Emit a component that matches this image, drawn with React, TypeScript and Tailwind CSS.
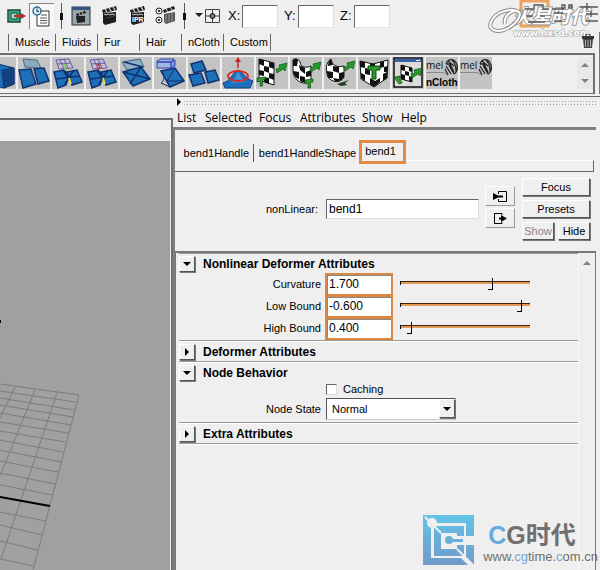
import React, { useState } from 'react';

const SHELF_TABS = [
  { name: 'Muscle', width: 'w-[47px]' },
  { name: 'Fluids', width: 'w-[42px]' },
  { name: 'Fur', width: 'w-[42px]' },
  { name: 'Hair', width: 'w-[42px]' },
  { name: 'nCloth', width: 'w-[42px]' },
  { name: 'Custom', width: 'w-[47px]' },
];

const MENUS = [
  { name: 'List', width: 'w-[28px]' },
  { name: 'Selected', width: 'w-[54px]' },
  { name: 'Focus', width: 'w-[41px]' },
  { name: 'Attributes', width: 'w-[62px]' },
  { name: 'Show', width: 'w-[39px]' },
  { name: 'Help', width: 'w-[30px]' },
];

const RAISED = 'border border-t-white border-l-white border-r-[#555] border-b-[#555] shadow-[1px_1px_0_#777]';

// ---------- toolbar icons ----------

function RenderTarget() {
  return (
    <svg width="20" height="16" viewBox="0 0 20 16">
      <rect x="1" y="2" width="12" height="12" fill="#3fae86" stroke="#164b3c" strokeWidth="1.5" />
      <rect x="4" y="5" width="6" height="6" fill="#8fe0da" stroke="#164b3c" />
      <path d="M7 8h8" stroke="#c22" strokeWidth="2" />
      <path d="M14 5l5 3-5 3z" fill="#c22" />
    </svg>
  );
}

function HistoryIcon() {
  return (
    <svg width="20" height="22" viewBox="0 0 20 22">
      <path d="M5 5h12v15H5z" fill="#fff" stroke="#333" />
      <path d="M9 9h6M8 12h7M8 14.500h7M8 17h7" stroke="#555" />
      <circle cx="5" cy="5" r="4" fill="#dff3fb" stroke="#2a6f96" strokeWidth="1.500" />
      <path d="M5 2.500v3h2" stroke="#124" fill="none" />
    </svg>
  );
}

function Clapper({ label }: { label?: string }) {
  return (
    <svg width="18" height="22" viewBox="0 0 18 22">
      <path d="M1 5L15 1l1 4L2 8z" fill="#1b1b1b" />
      <path d="M4 4l2 3M8 3l2 3M12 2l2 3" stroke="#ddd" strokeWidth="1.300" />
      <path d="M2 8l13-1v10L4 20l-2-2z" fill="#1f1f1f" />
      <path d="M3 9l2 1 2-1 2 1 2-1 3 1" stroke="#ccc" fill="none" />
      {label ? (
        <text x="3" y="17" fontSize="7" fontWeight="bold" fill="#fff" fontFamily="Liberation Sans, sans-serif">{label}</text>
      ) : (
        <path d="M6 13l7-2" stroke="#444" />
      )}
    </svg>
  );
}

function ClapperWindow() {
  return (
    <svg width="20" height="20" viewBox="0 0 20 20">
      <rect x="1" y="1" width="18" height="18" fill="#9aa5ac" stroke="#26303c" />
      <path d="M1 1h18v3H1z" fill="#35537c" />
      <path d="M5 8l9-3 1 2-9 3z" fill="#111" />
      <path d="M5 10h9v6l-8 1z" fill="#222" />
      <path d="M8 7l1 2M11 6l1 2" stroke="#ddd" />
    </svg>
  );
}

function ClapperGlobals() {
  return (
    <svg width="21" height="22" viewBox="0 0 21 22">
      <g fill="#eee" stroke="#222">
        <circle cx="4" cy="6" r="3" />
        <circle cx="4" cy="15" r="3" />
      </g>
      <circle cx="4" cy="6" r="1" />
      <circle cx="4" cy="15" r="1" />
      <path d="M8 5l11-4 1 3L9 8z" fill="#222" />
      <path d="M11 4l2 3M15 2l2 3" stroke="#ddd" />
      <path d="M9 9l11-2v9l-9 3-2-2z" fill="#555" />
      <path d="M11 10v7M14 9v8M17 8v8" stroke="#999" />
    </svg>
  );
}

function ToolSeparator() {
  return (
    <svg width="5" height="26" viewBox="0 0 5 26">
      <path d="M2.500 0v26" stroke="#555" />
      <path d="M1 10h3v7H1z" fill="#111" />
    </svg>
  );
}

function PivotIcon() {
  return (
    <svg width="25" height="16" viewBox="0 0 25 16">
      <path d="M0 5h8L4 9z" fill="#222" />
      <path d="M10.500 1.500h14v13h-14zM17.500 1v14M10 8h15" fill="none" stroke="#444" />
      <circle cx="17.500" cy="8" r="2.500" fill="#777" stroke="#111" />
    </svg>
  );
}

const SWIRL = 'M32 13C24 6 7 12 3 22c-4 9 8 12 19 5 9-6 13-15 7-16-6-1-14 6-12 13';

function LayoutIcons() {
  return (
    <svg width="112" height="38" viewBox="0 0 112 38">
      <path d="M33 1h27v25H33z" fill="none" stroke="#eda35f" strokeWidth="3" />
      <text x="25" y="23" fontSize="19" fontFamily="Noto Sans CJK SC, sans-serif" fontWeight="bold" fontStyle="italic" fill="#fff" stroke="#999" strokeWidth="2" paintOrder="stroke">火星时代</text>
      <g fill="none" stroke="#555" strokeWidth="1.300">
        <path d="M37 9h9V5h9v4h6M40 22h17M39 16h6M52 16h5" />
        <path d="M64 9h12M66 13h9M74 5h3v3h-3zM81 5h3v3h-3zM66 21h8" />
        <path d="M92 7h18M99 3v7M98 14h12M103 11v6M98 21h12" />
      </g>
      <path d={SWIRL} fill="none" stroke="#8c8c8c" strokeWidth="4" />
      <path d={SWIRL} fill="none" stroke="#fff" strokeWidth="2" />
      <text x="25" y="36" fontSize="9" fontWeight="bold" fill="#fff" stroke="#999" strokeWidth="1" paintOrder="stroke" fontFamily="DejaVu Sans, sans-serif">www.hxsd.com</text>
    </svg>
  );
}

function TrashIcon() {
  return (
    <svg width="14" height="15" viewBox="0 0 14 15">
      <path d="M5 2V0h4v2" fill="none" stroke="#333" />
      <path d="M1 2h12v3H1z" fill="#333" />
      <path d="M2 5h10l-1 9H3z" fill="#444" />
      <path d="M4.500 6v7M7 6v7M9.500 6v7" stroke="#aaa" />
    </svg>
  );
}

// ---------- shelf icons ----------

const BLUE = '#1d6fb8';
const NAVY = '#12316f';

function Lattice() {
  return (
    <g stroke={NAVY}>
      <path d="M0 10l14-3 16 4v16l-10 4L0 26z" fill={BLUE} />
      <path d="M18 13l12-2v16l-10 4z" fill="#104a86" />
      <path d="M20 15v15M24 13v15M27 12v16M18 19l12-3M19 24l11-3" fill="none" strokeWidth="0.700" />
    </g>
  );
}

function Wrap() {
  return (
    <g stroke={NAVY}>
      <path d="M5 2l14 1 4 8-16-1z" fill="#8baabe" stroke="#4c6a80" />
      <path d="M1 13l12-1 5 15-13 4z" fill={BLUE} strokeWidth="1.500" />
      <path d="M16 12l10-1 5 13-11 3z" fill={BLUE} strokeWidth="1.500" />
      <path d="M14 13l3 9" stroke="#777" />
    </g>
  );
}

function Cluster({ hot }: { hot?: string }) {
  return (
    <g stroke={NAVY}>
      <path d="M4 3l13-1 4 9-14 1z" fill="#c3c3cc" stroke="#6b56a8" />
      <path d="M8 3l4 9M12 2l4 9M5 7l14-1" stroke="#6b56a8" />
      <path d="M2 15l10-2 5 6-3 9-8 3z" fill={BLUE} strokeWidth="1.500" />
      <path d="M15 15l10-2 5 12-10 3z" fill={BLUE} strokeWidth="1.500" />
      <path d="M11 13l9 14M22 13l-9 14M4 22l24-3" fill="none" strokeWidth="1.500" />
      <path d="M17 21l2 6" stroke="#e9e23c" strokeWidth="2" />
      <path d="M11 7l3 2M12 12l2-2" stroke={hot} strokeWidth="2" />
    </g>
  );
}

function SoftMod() {
  return (
    <g stroke={NAVY}>
      <path d="M2 5l18-3 4 8-17 3z" fill="#8fafc4" stroke="#3d6080" />
      <path d="M3 15l18-5 9 12-17 7z" fill={BLUE} strokeWidth="1.500" />
      <path d="M4 5l19 5M10 27L21 10M3 15l27 7" fill="none" strokeWidth="1.500" />
    </g>
  );
}

function Jiggle() {
  return (
    <g stroke={NAVY}>
      <path d="M3 4l4-2h13l-3 3H3zM3 5h14v6H3z" fill="#9bb9dd" stroke="#3540b8" />
      <path d="M17 5v6l4-2V3z" fill="#7d9cd6" stroke="#3540b8" />
      <path d="M7 14l14-3 9 13-14 6z" fill={BLUE} strokeWidth="1.500" />
      <path d="M7 14c5 4 3 10 0 12l9 4M21 11l-8 13 17 0" fill="none" />
    </g>
  );
}

function Blend() {
  return (
    <g stroke={NAVY} strokeWidth="1.500" fill={BLUE}>
      <path d="M3 7l11-3 4 9-12 3z" />
      <path d="M1 18l12-2 4 10-12 3z" />
      <path d="M17 15l10-2 4 10-11 3z" />
    </g>
  );
}

function Sculpt() {
  return (
    <g>
      <path d="M1 26c8-2 9-10 15-13 6 3 8 9 15 11l-3 7H3z" fill="#1f6fbe" stroke="#16427c" />
      <path d="M9 26c4-3 5-7 7-12 3 4 3 8 7 11" fill="#3d94d8" />
      <ellipse cx="16" cy="19" rx="10" ry="5" fill="none" stroke="#d92828" strokeWidth="1.800" />
      <path d="M16 11V4" stroke="#c22" strokeWidth="1.500" />
      <path d="M13 5l3-5 3 5z" fill="#c22" />
    </g>
  );
}

function GreenArrow({ move }: { move: string }) {
  return <path transform={move} d="M0 6l4-1-1-3 8-2-2 8-2-2-6 4z" fill="#24992c" stroke="#0b5411" strokeWidth="0.700" />;
}

function LetterT({ move }: { move: string }) {
  return <path transform={move} d="M0 1l8-1v3H5.500v6H3V4L0 5z" fill="#2f9d31" stroke="#0b4a10" strokeWidth="0.700" />;
}

function FlatChecker() {
  return (
    <g>
      <path d="M3 2l15 4v22L3 23z" fill="#fff" stroke="#111" />
      <path d="M3 2l5 1v6L3 7zM13 5l5 1v6l-5-2zM8 9l5 1v6l-5-2zM3 13l5 1v5l-5-1zM13 16l5 1v6l-5-2zM8 20l5 1v6l-5-2z" fill="#111" />
      <GreenArrow move="translate(20 6)" />
      <LetterT move="translate(1 20)" />
    </g>
  );
}

function BentChecker() {
  return (
    <g>
      <path d="M3 3c2-2 6-1 7 2 1 6 6 6 11 4v15c-8 5-17 0-18-10z" fill="#fff" stroke="#111" />
      <path d="M3 3c2-2 4-1 5 0l-1 6-4 0zM9 8l6 3v6l-5-4zM3 14l6 1v7c-4-1-6-5-6-8zM16 15l5-2v6l-5 1zM10 19l5 1v6l-5-2z" fill="#111" />
      <GreenArrow move="translate(20 5)" />
      <LetterT move="translate(15 22)" />
    </g>
  );
}

function RoundChecker() {
  return (
    <g>
      <path d="M7 2c1 6 5 9 13 7v11c-3 6-12 6-16 0C1 13 2 5 7 2z" fill="#fff" stroke="#111" />
      <path d="M7 2l2 6-5 1c0-3 1-6 3-7zM9 9l6 1v6l-6-2zM3 14l6 1v6l-4 0c-2-2-2-5-2-7zM15 16l5-1v5l-3 4-2-1zM9 21l6 1v3c-2 0-5-1-6-4z" fill="#111" />
      <GreenArrow move="translate(20 4)" />
      <path d="M13 27l12-4-4 3 2 2-6 1z" fill="#223b22" />
    </g>
  );
}

function ShieldChecker() {
  return (
    <g>
      <path d="M2 4l13 3 15-4-1 18-13 9-13-8z" fill="#fff" stroke="#111" />
      <path d="M2 4l5 1v6l-5-1zM12 6l5 1v5l-5-1zM22 5l4-1v6l-4 1zM7 11l5 1v6l-5-1zM26 10l4-1-1 6h-3zM3 16l4 2v6l-4-3zM12 21l5 3 5-3v4l-6 5-4-3zM25 17l4-2v6l-4 3z" fill="#111" />
      <path d="M10 9h12v4h-4v9h-4v-9h-4z" fill="#2b9b30" stroke="#0b4a10" />
    </g>
  );
}

function WindowChecker() {
  return (
    <g>
      <path d="M2 1h28v29H2z" fill="#dcdcda" stroke="#111" strokeWidth="1.500" />
      <path d="M3 2h26v3H3z" fill="#3a62ac" />
      <path d="M24 3.500h4" stroke="#fff" />
      <path d="M9 8l11 3v14L9 22z" fill="#fff" stroke="#111" />
      <path d="M9 8l4 1v5l-4-1zM17 10l3 1v4l-3-1zM13 14l4 1v4l-4-1zM9 17l4 1v5l-4-1zM17 19l3 1v5l-3-1z" fill="#111" />
      <GreenArrow move="translate(19 11)" />
      <path d="M3 20l5-1v3l2 4-3 1-3-4z" fill="#2f9d31" stroke="#0b4a10" strokeWidth="0.700" />
    </g>
  );
}

function MelScript({ label }: { label?: string }) {
  return (
    <g fontFamily="Open Sans, sans-serif">
      <text x="0" y="12" fontSize="10" fill="#111">mel</text>
      <g fill="none" stroke="#222" strokeWidth="1.300">
        <path d="M20 7c2-6 9-6 11 1 1 4 0 7-3 9M20 7l4 0 4 8M22 4l6 5M20 9l5 8M24 10l4 7-5-9M19 12l3 6M26 3c3 3 4 7 4 11" />
      </g>
      <path d="M0 15.500h16c3 0 4 2 6 3" stroke="#888" fill="none" />
      {label && (
        <text x="0" y="29" fontSize="10" fontWeight="bold" fontFamily="Liberation Sans, sans-serif">{label}</text>
      )}
    </g>
  );
}

const SHELF_ITEMS = [
  { name: 'Wrap', art: <Wrap /> },
  { name: 'Cluster', art: <Cluster hot="#7bd04a" /> },
  { name: 'Point on curve', art: <Cluster hot="#d02c2c" /> },
  { name: 'Soft modification', art: <SoftMod /> },
  { name: 'Jiggle', art: <Jiggle /> },
  { name: 'Blend shape', art: <Blend /> },
  { name: 'Sculpt', art: <Sculpt /> },
  { name: 'Planar map', art: <FlatChecker /> },
  { name: 'Cylindrical map', art: <BentChecker /> },
  { name: 'Spherical map', art: <RoundChecker /> },
  { name: 'Automatic map', art: <ShieldChecker /> },
  { name: 'UV editor', art: <WindowChecker /> },
  { name: 'nCloth script', art: <MelScript label="nCloth" /> },
  { name: 'Script', art: <MelScript /> },
];

function ShelfButton({ name, children }: { name: string; children: React.ReactNode }) {
  return (
    <button aria-label={name} className="h-8 w-8 shrink-0 bg-[#c3c3c3]">
      <svg width="32" height="32" viewBox="0 0 32 32">{children}</svg>
    </button>
  );
}

// ---------- top area ----------

function Toolbar() {
  return (
    <div className="flex h-8 items-center pl-[7px]">
      <button aria-label="Render target" className="w-[22px]"><RenderTarget /></button>
      <button aria-label="Construction history" className="mr-[5px] flex h-[26px] w-[25px] items-center justify-center border-t border-l border-[#888] bg-[#f8f8f8]">
        <HistoryIcon />
      </button>
      <ToolSeparator />
      <button aria-label="Render view" className="ml-[7px]"><ClapperWindow /></button>
      <button aria-label="Render" className="ml-[10px]"><Clapper /></button>
      <button aria-label="IPR render" className="ml-[10px]"><Clapper label="IPR" /></button>
      <button aria-label="Render settings" className="ml-2"><ClapperGlobals /></button>
      <div className="mx-[6px]"><ToolSeparator /></div>
      <button aria-label="Input mode" className="mr-2 ml-[2px]"><PivotIcon /></button>
      {['X', 'Y', 'Z'].map(axis => (
        <label key={axis} className="mr-[6px] flex items-center text-[13px]">
          <span className="w-[14px]">{axis}:</span>
          <input aria-label={axis} className="h-[23px] w-9 border border-t-[#666] border-l-[#666] border-r-[#e0e0e0] border-b-[#e0e0e0] bg-white" />
        </label>
      ))}
    </div>
  );
}

function Shelf() {
  return (
    <div className="border-r border-[#777]">
      <div className="flex h-[21px] items-center pl-2">
        {SHELF_TABS.map(tab => (
          <button key={tab.name} className={`h-[17px] border-l border-[#666] pl-[6px] text-left ${tab.width}`}>
            {tab.name}
          </button>
        ))}
        <div className="h-[17px] border-l border-[#666]" />
      </div>
      <div className="mr-1 flex border-t-2 border-r-2 border-b border-[#707070] pt-[2px] pb-1">
        <div className="flex min-w-0 flex-1 gap-[2px] overflow-hidden">
          <button aria-label="Lattice" className="h-8 w-4 shrink-0 bg-[#c3c3c3]">
            <svg width="16" height="32" viewBox="16 0 16 32"><Lattice /></svg>
          </button>
          {SHELF_ITEMS.map(item => (
            <ShelfButton key={item.name} name={item.name}>{item.art}</ShelfButton>
          ))}
        </div>
        <div className="flex w-4 flex-col items-center justify-around bg-[#e8e8e8]">
          <button aria-label="Scroll shelf up"><Arrow dir="up" muted /></button>
          <button aria-label="Scroll shelf down"><Arrow dir="down" muted /></button>
        </div>
      </div>
    </div>
  );
}

const ARROWS = {
  up: 'M0 6l4-4 4 4z',
  down: 'M0 2l4 4 4-4z',
  right: 'M2 0l4 4-4 4z',
};

function Arrow({ dir, muted }: { dir: keyof typeof ARROWS; muted?: boolean }) {
  return (
    <svg width="8" height="8" viewBox="0 0 8 8">
      <path d={ARROWS[dir]} fill={muted ? '#808080' : '#000'} />
    </svg>
  );
}

// ---------- viewport ----------

function Viewport() {
  return (
    <div className="mt-[21px] w-[173px] shrink-0 border-t-2 border-r-2 border-[#707070]">
      <div className="h-[21px]" />
      <div className="mr-px h-[calc(100%-21px)] overflow-hidden bg-[#a0a0a0]">
        <svg width="170" height="430" viewBox="0 0 170 430">
          <path d="M0 179h1v3H0z" />
          <g stroke="#7c7c7c" fill="none">
            <path d="M0 243L79 254M0 250L76 261M0 257L74 269M0 264L73 276M0 272L71 284M0 281L68 292M0 290L65 301M0 299L63 311M0 309L61 321M0 320L58 331M0 332L55 343M0 344L53 354M0 371L46 380M0 384L42 394M0 400L38 409M0 418L34 425" />
            <path d="M79 254L33 429M57 252L1 418M35 249L0 335M15 246L0 277" />
          </g>
          <path d="M0 356l50 9" stroke="#000" strokeWidth="2" />
        </svg>
      </div>
    </div>
  );
}

// ---------- attribute editor ----------

function Fold({ title, open, children }: { title: string; open: boolean; children?: React.ReactNode }) {
  const [expanded, setExpanded] = useState(open);

  return (
    <section className="mb-px border-b border-[#999] pt-px shadow-[0_1px_0_#fff]">
      <h3 className="flex h-[18px] items-center gap-2 text-[12px] font-bold">
        <button
          aria-label={title}
          onClick={() => setExpanded(!expanded)}
          className={`flex h-4 w-4 items-center justify-center ${RAISED}`}
        >
          <Arrow dir={expanded ? 'down' : 'right'} />
        </button>
        {title}
      </h3>
      {expanded && children}
    </section>
  );
}

function NumberRow({ label, value, position }: { label: string; value: string; position: number }) {
  const [amount, setAmount] = useState(value);

  return (
    <div className="flex h-[22px] items-center">
      <label htmlFor={label} className="w-[142px] shrink-0 text-right">{label}</label>
      <input
        id={label}
        value={amount}
        onChange={e => setAmount(e.target.value)}
        className="ml-1 h-[23px] w-[68px] shrink-0 border-2 border-[#dc8740] bg-white pl-[2px] text-[12px] shadow-[inset_1px_1px_0_#888]"
      />
      <div className="relative ml-[7px] h-4 w-[130px]">
        <div className="mt-[5px] h-[3px] border-t border-[#3a2410] bg-[#e39a58]" />
        <div className="absolute top-[5px] left-0 h-1 w-px bg-black" />
        <div
          className="absolute top-[2px] h-3 w-[5px] border-r border-b border-black"
          style={{ left: `${position}%` }}
        />
        <input
          type="range"
          aria-label={`${label} slider`}
          defaultValue={position}
          className="absolute inset-0 h-4 w-full opacity-0"
        />
      </div>
    </div>
  );
}

function PlugIcon({ out }: { out?: boolean }) {
  return (
    <svg width="16" height="13" viewBox="0 0 16 13">
      {out ? (
        <>
          <path d="M10 3V1.500H2.500v10H10V10" fill="none" stroke="#000" />
          <path d="M7 6.500h3" stroke="#000" strokeWidth="2" />
          <path d="M9 3l6 3.500L9 10z" />
        </>
      ) : (
        <>
          <path d="M6.500 4V1.500h8v10h-8V9" fill="none" stroke="#000" />
          <path d="M1 3l7 3.500L1 10zM6 5.500h5v2H6z" />
        </>
      )}
    </svg>
  );
}

function NodeHeader() {
  const [nodeName, setNodeName] = useState('bend1');

  return (
    <div className="flex h-[79px] pt-[6px]">
      <label htmlFor="node" className="w-[143px] shrink-0 pt-[23px] text-right">nonLinear:</label>
      <input
        id="node"
        value={nodeName}
        onChange={e => setNodeName(e.target.value)}
        className="mt-[21px] ml-[8px] h-5 w-[153px] shrink-0 border border-t-[#666] border-l-[#666] border-r-[#ddd] border-b-[#ddd] bg-white pl-[2px] text-[12px]"
      />
      <div className="mt-2 ml-[6px] flex flex-col gap-[2px]">
        <button aria-label="Go to input" className="flex h-5 w-[30px] items-center justify-center border border-t-white border-l-white border-r-[#999] border-b-[#999]"><PlugIcon /></button>
        <button aria-label="Go to output" className="flex h-5 w-[30px] items-center justify-center border border-t-white border-l-white border-r-[#999] border-b-[#999]"><PlugIcon out /></button>
      </div>
      <div className="ml-[7px] flex w-[68px] flex-col gap-1">
        <button className={`h-[18px] ${RAISED}`}>Focus</button>
        <button className={`h-[18px] ${RAISED}`}>Presets</button>
        <div className="flex gap-1">
          <button disabled className={`h-[18px] w-8 text-[#888] ${RAISED}`}>Show</button>
          <button className={`h-[18px] w-8 ${RAISED}`}>Hide</button>
        </div>
      </div>
    </div>
  );
}

function AttributeEditor() {
  const [tab, setTab] = useState('bend1');

  return (
    <div className="flex min-w-0 flex-1 flex-col pr-1">
      <div className="flex h-[10px] items-center pl-[2px]">
        <Arrow dir="right" />
        <div className="h-[5px] flex-1 bg-[radial-gradient(#999_30%,transparent_35%)] bg-[length:3px_3px]" />
      </div>
      <nav className="flex h-5 items-center pt-[2px] pl-1 font-['Open_Sans',sans-serif] text-[12px]">
        {MENUS.map(menu => (
          <button key={menu.name} className={`shrink-0 text-left ${menu.width}`}>{menu.name}</button>
        ))}
      </nav>
      <div className="flex flex-1 flex-col border-t-[3px] border-l-2 border-[#808080]">
        <div className="mr-[2px] flex h-[42px] border-b border-[#666] pt-[10px] pl-[3px]">
          <button onClick={() => setTab('bend1Handle')} className="mt-1 h-[18px] w-[76px] border-r border-[#555] pr-1 text-right">bend1Handle</button>
          <button onClick={() => setTab('bend1HandleShape')} className="mt-1 h-[18px] w-[105px] pl-[2px]">bend1HandleShape</button>
          <button
            onClick={() => setTab('bend1')}
            aria-pressed={tab === 'bend1'}
            className="h-6 w-[47px] border-[3px] border-[#e08a42] pr-1 pb-[2px]"
          >
            bend1
          </button>
          <div className="mt-5 h-[11px] flex-1 border-t border-r border-t-white border-r-[#666]" />
        </div>
        <NodeHeader />
        <div className="flex flex-1 border-t-2 border-r border-l border-[#777] pl-[3px]">
          <div className="flex-1 border-t border-[#999]">
            <Fold title="Nonlinear Deformer Attributes" open>
              <div className="pb-px">
                <NumberRow label="Curvature" value="1.700" position={68} />
                <NumberRow label="Low Bound" value="-0.600" position={90} />
                <NumberRow label="High Bound" value="0.400" position={5} />
              </div>
            </Fold>
            <Fold title="Deformer Attributes" open={false} />
            <Fold title="Node Behavior" open>
              <label className="ml-[147px] flex h-[14px] items-center gap-[6px]">
                <input type="checkbox" className="h-[11px] w-[11px] appearance-none border border-t-[#666] border-l-[#666] border-r-[#ddd] border-b-[#ddd] bg-white" />
                Caching
              </label>
              <div className="flex h-[26px] items-center">
                <label htmlFor="state" className="w-[142px] shrink-0 text-right">Node State</label>
                <div className="relative ml-[5px] w-[130px]">
                  <select id="state" className="block h-[22px] w-full appearance-none border border-t-[#555] border-l-[#555] border-r-[#ccc] border-b-[#ccc] bg-white pl-[5px]">
                    <option>Normal</option>
                    <option>HasNoEffect</option>
                    <option>Blocking</option>
                  </select>
                  <span className={`pointer-events-none absolute top-px right-px flex h-[19px] w-4 items-center justify-center bg-[#efefef] ${RAISED}`}>
                    <Arrow dir="down" />
                  </span>
                </div>
              </div>
            </Fold>
            <Fold title="Extra Attributes" open={false} />
          </div>
          <div className="flex w-[17px] justify-center border-l border-[#f8f8f8] pt-[6px]">
            <button aria-label="Scroll up" className="h-2"><Arrow dir="up" muted /></button>
          </div>
        </div>
      </div>
    </div>
  );
}

function SiteMark() {
  return (
    <div className="flex items-center gap-2">
      <svg width="52" height="51" viewBox="0 0 52 51">
        <defs>
          <linearGradient id="mark" gradientUnits="userSpaceOnUse" x1="0" y1="0" x2="0" y2="51">
            <stop stopColor="#62c4e8" />
            <stop offset="1" stopColor="#7399c8" />
          </linearGradient>
        </defs>
        <path d="M0 0h51v21h-8V8H8v35h30l7 7H0z" fill="url(#mark)" />
        <path d="M43 30h8v20l-8-7z" fill="url(#mark)" />
        <path d="M11 11h30v10h-7v-3H18v16h16v-4h7v11H11z" fill="url(#mark)" />
        <circle cx="26" cy="25" r="4" fill="url(#mark)" />
        <path d="M26 24h14v3H26z" fill="url(#mark)" />
        <path d="M2 2l16 16M34 34l16 16" stroke="#efefef" strokeWidth="2" />
        <circle cx="9" cy="8" r="5" fill="#efefef" />
      </svg>
      <div className="pt-1 text-[#707070]">
        <div className="pl-[5px] font-['Liberation_Sans','Noto_Sans_CJK_SC',sans-serif] text-[25px] leading-[28px] font-bold">
          <span className="text-[#66addd]">C</span>G时代
        </div>
        <div className="text-[13px] leading-[15px]">
          www.<span className="text-[#72a5d5]">cg</span>time.<span className="text-[#72a5d5]">c</span>om.cn
        </div>
      </div>
    </div>
  );
}

export default function App() {
  return (
    <div className="relative flex h-screen flex-col overflow-hidden bg-[#efefef] font-['Liberation_Sans',sans-serif] text-[11px] text-black">
      <Toolbar />
      <Shelf />
      <div className="mt-[2px] flex min-h-0 flex-1 border-t border-[#666]">
        <Viewport />
        <AttributeEditor />
      </div>
      <div className="pointer-events-none absolute top-0 right-0"><LayoutIcons /></div>
      <button aria-label="Delete" className="absolute top-[34px] right-[5px]"><TrashIcon /></button>
      <div className="pointer-events-none absolute right-[2px] bottom-1"><SiteMark /></div>
    </div>
  );
}
